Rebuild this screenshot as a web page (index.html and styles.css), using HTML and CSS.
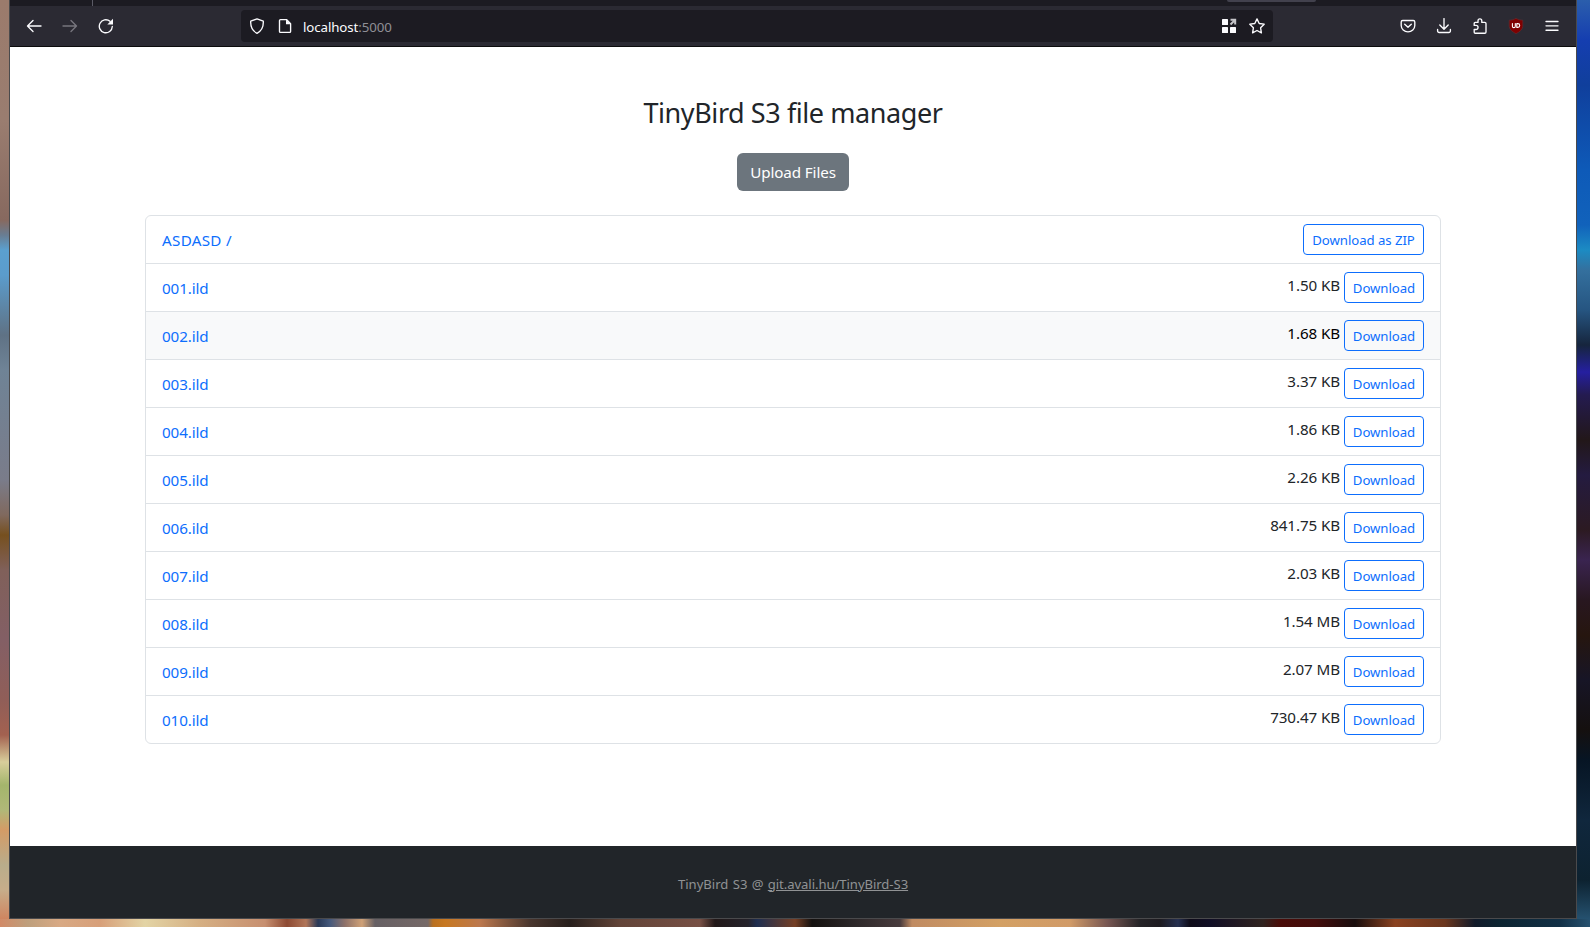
FILE: index.html
```html
<!DOCTYPE html>
<html lang="en">
<head>
<meta charset="utf-8">
<title>TinyBird S3 file manager</title>
<link rel="stylesheet" href="styles.css">
</head>
<body>
<div class="desktop">
  <div class="wall wall-left"></div>
  <div class="window">
    <div class="tabstrip"><span class="tab-sep"></span><span class="tab-active"></span></div>
    <div class="toolbar">
      <div class="nav">
        <svg width="16" height="16" viewBox="0 0 16 16" class="icon"><path d="M15 8H1.8M7 2.5 1.5 8 7 13.5"/></svg>
        <svg width="16" height="16" viewBox="0 0 16 16" class="icon dim"><path d="M1 8h13.2M9 2.5 14.5 8 9 13.5"/></svg>
        <svg width="16" height="16" viewBox="0 0 16 16" class="icon"><path d="M14.3 8.5A6.5 6.5 0 1 1 12 3.3"/><path class="solid" d="M15 .8v5.7H9.3z"/></svg>
      </div>
      <div class="urlbar">
        <svg width="16" height="16" viewBox="0 0 16 16" class="icon"><path d="M8 .9 14.3 3.2C14.6 8.8 12.8 12.8 8 15.3 3.2 12.8 1.4 8.8 1.7 3.2z"/></svg>
        <svg width="16" height="16" viewBox="0 0 16 16" class="icon page-icon"><path d="M3.5 1.6H9.5L13.6 5.7V13.4a1 1 0 0 1-1 1H3.5a1 1 0 0 1-1-1V2.6a1 1 0 0 1 1-1z"/><path class="solid" d="M9 1.5 13.8 6.3H9z"/></svg>
        <span class="url">localhost<span class="port">:5000</span></span>
        <span class="spacer"></span>
        <svg width="16" height="16" viewBox="0 0 16 16" class="icon"><g class="solid"><rect x="1" y="1" width="6" height="6" rx=".6"/><rect x="1" y="9" width="6" height="6" rx=".6"/><rect x="9" y="9" width="6" height="6" rx=".6"/></g><path class="arrow" d="M9.5 6.5 14 2M9.5 1.8H14.2V6.5"/></svg>
        <svg width="16" height="16" viewBox="0 0 16 16" class="icon star"><path d="M8 .9 10.2 5.5 15.2 6.2 11.6 9.8 12.4 14.9 8 12.5 3.6 14.9 4.4 9.8.8 6.2 5.8 5.5z"/></svg>
      </div>
      <div class="actions">
        <svg width="16" height="16" viewBox="0 0 16 16" class="icon"><path d="M2.7 2.5H13.3a1.5 1.5 0 0 1 1.5 1.5V7.5a6.8 6.3 0 0 1-13.6 0V4a1.5 1.5 0 0 1 1.5-1.5z"/><path d="M4.7 6.2 8 9.3 11.3 6.2"/></svg>
        <svg width="16" height="16" viewBox="0 0 16 16" class="icon"><path d="M8 .6V11M3.8 7 8 11.2 12.2 7M1.6 11.5V13a1.5 1.5 0 0 0 1.5 1.5h9.8a1.5 1.5 0 0 0 1.5-1.5V11.5"/></svg>
        <svg width="16" height="16" viewBox="0 0 16 16" class="icon"><path d="M2.2 7.4V5.4a1 1 0 0 1 1-1H6V2.8a1.9 1.9 0 0 1 3.8 0V4.4h3a1.2 1.2 0 0 1 1.2 1.2V14a1.2 1.2 0 0 1-1.2 1.2H3.2a1 1 0 0 1-1-1V11.5H4a2 2 0 0 0 0-4.1z"/></svg>
        <svg width="16" height="16" viewBox="0 0 16 16" class="icon"><path class="ublock" d="M8 .3C10 1.7 12.5 2 14.8 2.2V8.5C14.4 11.7 11.5 14 8 15.7 4.5 14 1.6 11.7 1.2 8.5V2.2C3.5 2 6 1.7 8 .3z"/><path class="ub" d="M4.4 5.5V8.2a1.2 1.2 0 0 0 2.9 0V5.5M8.8 5.6v3.8h1a1.9 1.9 0 0 0 0-3.8z"/></svg>
        <svg width="16" height="16" viewBox="0 0 16 16" class="icon"><path d="M2 3.5H14M2 7.8H14M2 12.2H14"/></svg>
      </div>
    </div>
    <main class="page">
      <h1 class="title">TinyBird S3 file manager</h1>
      <button class="upload">Upload Files</button>
      <ul class="files">
        <li class="row"><a class="name folder">ASDASD /</a><button class="btn zip">Download as ZIP</button></li>
        <li class="row"><a class="name">001.ild</a><span class="size">1.50 KB</span><button class="btn">Download</button></li>
        <li class="row hover"><a class="name">002.ild</a><span class="size">1.68 KB</span><button class="btn">Download</button></li>
        <li class="row"><a class="name">003.ild</a><span class="size">3.37 KB</span><button class="btn">Download</button></li>
        <li class="row"><a class="name">004.ild</a><span class="size">1.86 KB</span><button class="btn">Download</button></li>
        <li class="row"><a class="name">005.ild</a><span class="size">2.26 KB</span><button class="btn">Download</button></li>
        <li class="row"><a class="name">006.ild</a><span class="size">841.75 KB</span><button class="btn">Download</button></li>
        <li class="row"><a class="name">007.ild</a><span class="size">2.03 KB</span><button class="btn">Download</button></li>
        <li class="row"><a class="name">008.ild</a><span class="size">1.54 MB</span><button class="btn">Download</button></li>
        <li class="row"><a class="name">009.ild</a><span class="size">2.07 MB</span><button class="btn">Download</button></li>
        <li class="row"><a class="name">010.ild</a><span class="size">730.47 KB</span><button class="btn">Download</button></li>
      </ul>
    </main>
    <footer class="footer"><span class="credit">TinyBird S3 @ <a class="repo">git.avali.hu/TinyBird-S3</a></span></footer>
  </div>
  <div class="wall wall-right"></div>
  <div class="wall wall-bottom"></div>
</div>
</body>
</html>
```

FILE: styles.css
```css
* { box-sizing: border-box; }
body { margin: 0; font-family: "Noto Sans", "Open Sans", sans-serif; overflow: hidden; }
.desktop { width: 1590px; height: 927px; display: grid; grid-template-columns: 9px 1568px 13px; grid-template-rows: 919px 8px; }
.wall-left { background: linear-gradient(#9b7b6c 0, #9a7d70 120px, #87695f 220px, #697d92 235px, #5ba0cf 250px, #5b9ccc 275px, #5f7285 335px, #6f8396 370px, #7a7c8a 480px, #80695e 515px, #76501f 535px, #80605a 570px, #835f65 640px, #905e58 700px, #a36150 735px, #d8ce9b 762px, #a4b56c 785px, #b0b878 810px, #d49b66 830px, #b9ad8b 865px, #c7ad8a 890px, #cf8560 919px); }
.wall-right { background: linear-gradient(#2b5eac 0, #153eb0 40px, #103f9c 85px, #0e5ab8 170px, #1162bb 225px, #1c8bc3 250px, #34709e 270px, #265581 310px, #16253d 345px, #251fa0 372px, #241b50 395px, #221719 440px, #241b40 475px, #2c1a22 530px, #3a2450 560px, #281720 600px, #26160f 635px, #171526 680px, #15100f 730px, #071524 760px, #10273d 820px, #0d2230 880px, #25516f 919px); }
.wall-bottom { grid-column: 1 / 4; background: linear-gradient(90deg, #d18a67 0, #be9f7c 28px, #d8a984 60px, #d79f79 100px, #e3d4a5 145px, #d5af83 200px, #c78f70 265px, #8d4a33 287px, #b17659 306px, #293957 318px, #45597c 330px, #8e7169 345px, #cfa177 362px, #666064 375px, #766967 428px, #b97020 433px, #c77821 445px, #bc784e 480px, #49362e 530px, #271f1c 570px, #624438 620px, #775045 700px, #211818 715px, #24222a 748px, #1e2e50 757px, #753f25 795px, #14110f 812px, #292526 850px, #483b3d 900px, #c08b62 912px, #d3a064 1000px, #d19b68 1070px, #755551 1108px, #242326 1140px, #1d1b20 1160px, #263050 1178px, #0e0b18 1190px, #100e25 1210px, #30231f 1263px, #490c08 1280px, #440d0c 1315px, #180d0d 1355px, #8a4220 1395px, #6a361e 1445px, #111a29 1475px, #0c2431 1500px, #123046 1560px, #275270 1590px); }
.window { border: 1px solid #4a4a4c; border-top: 0; display: grid; grid-template-rows: 6px 41px 799px 72px; background: #fff; }
.tabstrip { background: #1c1b22; display: flex; align-items: flex-start; }
.tab-sep { width: 1px; height: 6px; margin-left: 82px; background: #5b5b66; }
.tab-active { width: 89px; height: 2px; margin-left: 1134px; background: #42414d; border-radius: 0 0 4px 4px; }
.toolbar { background: #2b2a33; border-bottom: 1px solid #0c0c0d; display: flex; align-items: center; color: #fbfbfe; }
.nav { display: flex; gap: 20px; padding-left: 16px; width: 231px; }
.icon { display: block; flex: none; fill: none; stroke: #fbfbfe; stroke-width: 1.35; stroke-linecap: round; stroke-linejoin: round; }
.icon .solid { fill: #fbfbfe; stroke: none; }
.dim { stroke: #77767e; }
.arrow { stroke: #c5c5c9; stroke-width: 2; stroke-linecap: butt; stroke-linejoin: miter; }
.ublock { fill: #800000; stroke: #5d3038; stroke-width: .6; }
.ub { stroke: #fff; stroke-width: 1.1; }
.urlbar { width: 1032px; height: 32px; background: #1c1b22; border-radius: 4px; display: flex; align-items: center; padding: 0 8px; }
.page-icon { margin-left: 12px; }
.url { font-size: 13.3px; letter-spacing: -.1px; line-height: 20px; margin-left: 10px; padding-top: 1px; }
.port { color: #8f8f96; }
.spacer { flex: 1; }
.star { margin-left: 12px; }
.actions { display: flex; gap: 20px; margin-left: auto; padding-right: 16px; }
.page { display: flex; flex-direction: column; align-items: center; }
.title { margin: 48px 0 0; font-weight: 400; font-size: 27px; letter-spacing: -.42px; line-height: 36px; color: #212529; }
.upload { margin: 22px 0 24px; width: 112px; height: 38px; border: 0; border-radius: 6px; background: #6c757d; color: #fff; font: 15.2px/24px "Noto Sans", sans-serif; letter-spacing: -.1px; padding: 0; }
.files { list-style: none; margin: 0; padding: 0; width: 1296px; border: 1px solid #dee2e6; border-radius: 6px; overflow: hidden; }
.row { height: 48px; border-bottom: 1px solid #dee2e6; display: flex; padding: 8px 16px; color: #212529; font-size: 15.2px; letter-spacing: -.1px; line-height: 24px; }
.row:last-child { border-bottom: 0; height: 47px; }
.hover { background: #f8f9fa; color: #000; }
.name { color: #0d6efd; margin-right: auto; padding-top: 4px; }
.folder { letter-spacing: .3px; }
.size { margin-right: 4px; padding-top: 1px; }
.btn { width: 80px; height: 31px; border: 1px solid #0d6efd; border-radius: 4px; background: none; color: #0d6efd; font: 13.2px/21px "Noto Sans", sans-serif; letter-spacing: -.05px; padding: 2px 0 0; white-space: nowrap; }
.zip { width: 121px; }
.footer { background: #212529; color: #909294; font-size: 13.1px; line-height: 21px; display: flex; align-items: center; justify-content: center; padding-top: 4px; }
.credit { word-spacing: .9px; }
.repo { text-decoration: underline; letter-spacing: -.06px; }
```
